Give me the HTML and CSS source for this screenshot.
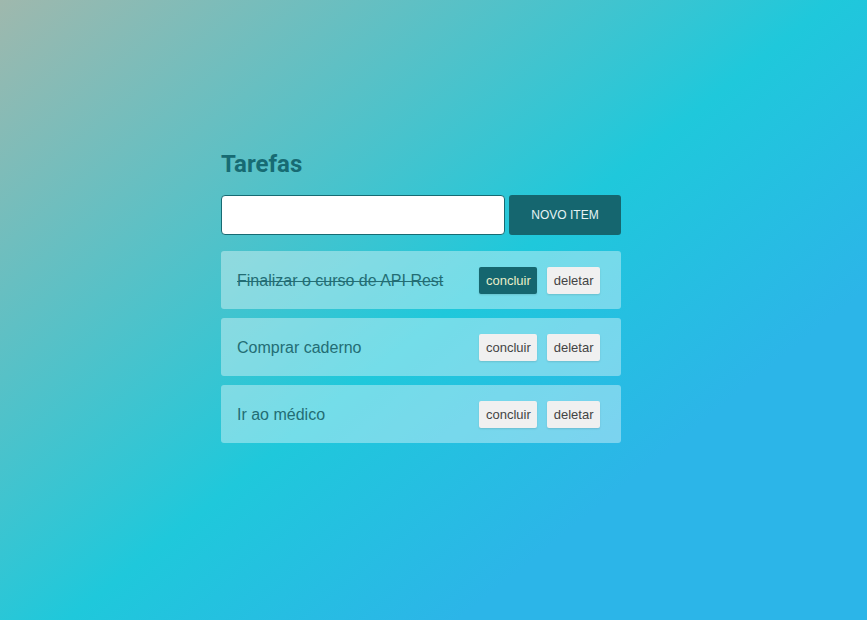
FILE: index.html
```html
<!DOCTYPE html>
<html lang="pt-BR">
<head>
<meta charset="utf-8">
<title>Tarefas</title>
<link rel="stylesheet" href="styles.css">
</head>
<body>
<main class="app">
  <h1 class="title">Tarefas</h1>
  <form class="new-item">
    <input class="new-input" type="text">
    <button class="new-btn" type="button">NOVO ITEM</button>
  </form>
  <ul class="list">
    <li class="item done">
      <span class="item-text">Finalizar o curso de API Rest</span>
      <div class="actions">
        <button class="btn btn-active" type="button">concluir</button>
        <button class="btn" type="button">deletar</button>
      </div>
    </li>
    <li class="item">
      <span class="item-text">Comprar caderno</span>
      <div class="actions">
        <button class="btn" type="button">concluir</button>
        <button class="btn" type="button">deletar</button>
      </div>
    </li>
    <li class="item">
      <span class="item-text">Ir ao médico</span>
      <div class="actions">
        <button class="btn" type="button">concluir</button>
        <button class="btn" type="button">deletar</button>
      </div>
    </li>
  </ul>
</main>
</body>
</html>
```
FILE: styles.css
```css
html, body {
  margin: 0;
  height: 100%;
}
body {
  background: linear-gradient(141deg, #9fb8ad 0%, #1fc8db 51%, #2cb5e8 75%);
  font-family: "Liberation Sans", Arial, sans-serif;
}
.app {
  width: 400px;
  margin-left: 221px;
  padding-top: 148px;
}
.title {
  font-family: Roboto, "Liberation Sans", sans-serif;
  font-weight: 700;
  font-size: 24px;
  line-height: 32px;
  color: #176b73;
  margin: 0 0 15px;
}
.new-item {
  display: flex;
  gap: 4px;
  margin: 0 0 16px;
}
.new-input {
  flex: 1;
  height: 40px;
  box-sizing: border-box;
  border: 1px solid #176b73;
  border-radius: 4px;
  background: #fff;
  margin: 0;
}
.new-btn {
  width: 112px;
  height: 40px;
  border: none;
  border-radius: 3px;
  background: #15666f;
  color: #e6f3f3;
  font-family: "Liberation Sans", Arial, sans-serif;
  font-size: 12px;
  margin: 0;
}
.list {
  list-style: none;
  margin: 0;
  padding: 0;
  display: flex;
  flex-direction: column;
  gap: 9px;
}
.item {
  height: 58px;
  box-sizing: border-box;
  display: flex;
  align-items: center;
  justify-content: space-between;
  padding: 0 21px 0 16px;
  border-radius: 3px;
  background: rgba(255, 255, 255, 0.38);
}
.item-text {
  font-size: 16px;
  color: #236d74;
  position: relative;
  top: 1px;
}
.done .item-text {
  text-decoration: line-through;
}
.actions {
  display: flex;
  gap: 10px;
}
.btn {
  height: 27px;
  padding: 0 6.5px;
  border: none;
  border-radius: 2px;
  background: #f0f0f0;
  color: #444;
  font-family: "Liberation Sans", Arial, sans-serif;
  font-size: 13px;
  box-shadow: 0 1px 2px rgba(0, 0, 0, 0.12);
  margin: 0;
}
.btn-active {
  background: #15666f;
  color: #e8eec8;
}
```
